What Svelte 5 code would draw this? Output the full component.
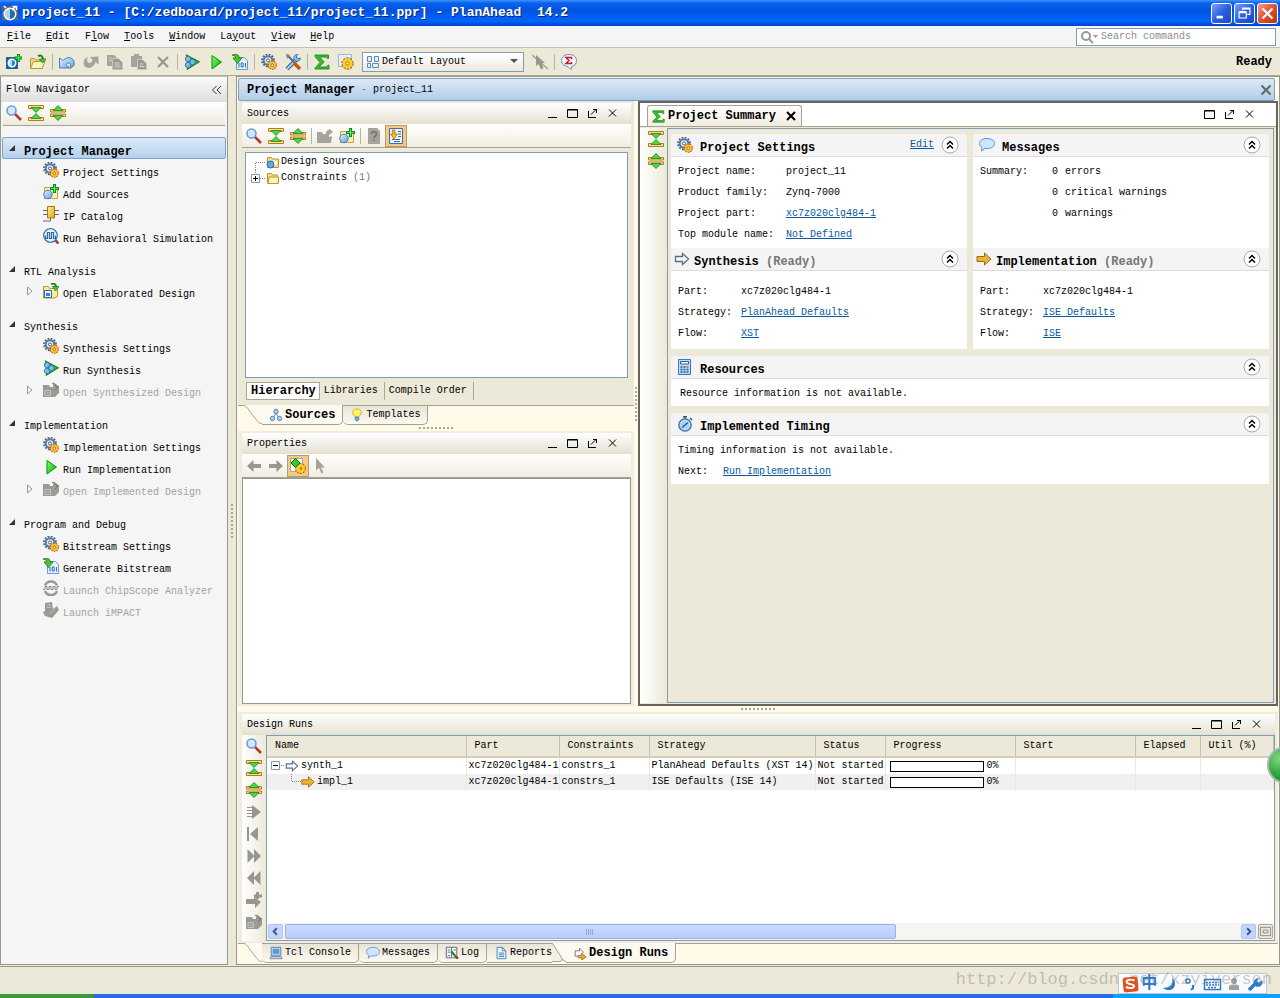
<script>
	const menus = [
		['', 'F', 'ile'],
		['', 'E', 'dit'],
		['F', 'l', 'ow'],
		['', 'T', 'ools'],
		['', 'W', 'indow'],
		['La', 'y', 'out'],
		['', 'V', 'iew'],
		['', 'H', 'elp']
	];

	// '|' is a separator
	const mainTools = [
		['new-project', 'New Project'],
		['open', 'Open Project'],
		['|'],
		['undo', 'Undo'],
		['redo', 'Redo'],
		['copy', 'Copy'],
		['paste', 'Paste'],
		['delete', 'Delete'],
		['|'],
		['run-synth', 'Run Synthesis'],
		['run', 'Run Implementation'],
		['bits', 'Generate Bitstream'],
		['|'],
		['gears', 'Project Settings'],
		['tools', 'Options'],
		['|'],
		['sigma', 'Project Summary'],
		['page-gear', 'Design Settings']
	];

	const sourceTools = [
		['search', 'Search'],
		['collapse', 'Collapse All'],
		['expand', 'Expand All'],
		['|'],
		['folder-off', 'Open File'],
		['add', 'Add Sources'],
		['|'],
		['help-off', 'Properties'],
		['scroll-to', 'Scroll to Selected']
	];

	const propertyTools = [
		['back', 'Back'],
		['forward', 'Forward'],
		['auto', 'Automatic Update'],
		['pointer', 'Select']
	];

	const runTools = [
		['search', 'Search'],
		['collapse', 'Collapse All'],
		['expand', 'Expand All'],
		['launch', 'Launch Runs'],
		['first', 'Reset Runs'],
		['next', 'Next'],
		['prev', 'Previous'],
		['add-run', 'Create Runs'],
		['design-off', 'Open Run']
	];

	const groups = [
		{
			title: 'Project Manager',
			current: true,
			items: [
				{ icon: 'gears', label: 'Project Settings' },
				{ icon: 'add', label: 'Add Sources' },
				{ icon: 'chip', label: 'IP Catalog' },
				{ icon: 'wave', label: 'Run Behavioral Simulation' }
			]
		},
		{
			title: 'RTL Analysis',
			items: [{ icon: 'design', label: 'Open Elaborated Design', tree: true }]
		},
		{
			title: 'Synthesis',
			items: [
				{ icon: 'gears', label: 'Synthesis Settings' },
				{ icon: 'run-synth', label: 'Run Synthesis' },
				{ icon: 'design-off', label: 'Open Synthesized Design', tree: true, off: true }
			]
		},
		{
			title: 'Implementation',
			items: [
				{ icon: 'gears', label: 'Implementation Settings' },
				{ icon: 'run', label: 'Run Implementation' },
				{ icon: 'design-off', label: 'Open Implemented Design', tree: true, off: true }
			]
		},
		{
			title: 'Program and Debug',
			items: [
				{ icon: 'gears', label: 'Bitstream Settings' },
				{ icon: 'bits', label: 'Generate Bitstream' },
				{ icon: 'scope', label: 'Launch ChipScope Analyzer', off: true },
				{ icon: 'impact', label: 'Launch iMPACT', off: true }
			]
		}
	];

	const runs = [
		{ name: 'synth_1', icon: 'arrow-open', strategy: 'PlanAhead Defaults (XST 14)', progress: 0 },
		{ name: 'impl_1', icon: 'arrow-gold', strategy: 'ISE Defaults (ISE 14)', progress: 0, child: true }
	];

	const runTabs = [
		['console', 'Tcl Console'],
		['bubble', 'Messages'],
		['log', 'Log'],
		['report', 'Reports']
	];
</script>

{#snippet icon(name)}
	<svg class="icon" viewBox="0 0 16 16" aria-hidden="true"><use href="#{name}" /></svg>
{/snippet}

{#snippet tools(list, active)}
	{#each list as [name, label]}
		{#if name === '|'}
			<span class="sep"></span>
		{:else}
			<button class="tool" class:active={name === active} title={label} aria-label={label}>{@render icon(name)}</button>
		{/if}
	{/each}
{/snippet}

{#snippet frameButtons(minimize)}
	<div class="frame-buttons">
		{#if minimize}
			<button aria-label="Minimize"><svg viewBox="0 0 11 11"><path d="M1 9.5h9" /></svg></button>
		{/if}
		<button aria-label="Maximize"><svg viewBox="0 0 11 11"><path d="M.5 1.500h10v8H.5zM1 2h9" /></svg></button>
		<button aria-label="Float"><svg viewBox="0 0 11 11"><path d="M1.500 3v7M1 9.500h8M4 6.500l5-5M6 1.500h4M9.500 1v4" /></svg></button>
		<button aria-label="Close"><svg viewBox="0 0 11 11"><path d="M2 1.500l7 7M9 1.500l-7 7" /></svg></button>
	</div>
{/snippet}

{#snippet fold()}
	<button class="fold" aria-label="Collapse section">
		<svg viewBox="0 0 18 18">
			<circle cx="9" cy="9" r="8" />
			<path d="M6 8.500l3-3 3 3M6 12.500l3-3 3 3" />
		</svg>
	</button>
{/snippet}

{#snippet slant()}
	<svg class="slant" viewBox="0 0 24 20" aria-hidden="true">
		<path class="face" d="M4 0c5 0 6 5 13 13 3 4 4 5.500 7 5.500V0z" />
		<path d="M4 0c5 0 6 5 13 13 3 4 4 5.500 7 5.500" />
	</svg>
{/snippet}

<!-- ------------------ icons ----------------- -->
<svg class="defs" width="0" height="0" aria-hidden="true">
	<defs>
		<linearGradient id="g-green" x1="0" y1="0" x2="1" y2="1">
			<stop offset="0" stop-color="#8f6" /><stop offset="1" stop-color="#0a1" />
		</linearGradient>
		<linearGradient id="g-gold" x1="0" y1="0" x2="1" y2="1">
			<stop offset="0" stop-color="#fff0a0" /><stop offset="1" stop-color="#e0a010" />
		</linearGradient>
		<linearGradient id="g-blue" x1="0" y1="0" x2="1" y2="1">
			<stop offset="0" stop-color="#e8f5ff" /><stop offset="1" stop-color="#5a9cdc" />
		</linearGradient>
	</defs>
	<symbol id="logo" viewBox="0 0 16 16">
		<path d="M0 1h16v14H0z" fill="#5d6672" /><circle cx="8" cy="9" r="6.500" fill="#fff" />
		<path d="M8 4a5 5 0 0 1 0 10z" fill="#1d6fa8" /><path d="M8 4a5 5 0 0 0 0 10z" fill="#a8d4f2" />
		<path d="M4 3L2 1M10 5l4-4M10.500 1.500h4V5" stroke="#fff" stroke-width="1.500" fill="none" />
	</symbol>
	<symbol id="new-project" viewBox="0 0 16 16">
		<path d="M0 3h12v12H0z" fill="#1d5f96" /><circle cx="6" cy="9" r="4.500" fill="#fff" />
		<path d="M6 6a3 3 0 0 1 0 6z" fill="#28c" /><path d="M6 6a3 3 0 0 0 0 6z" fill="#bde" />
		<path d="M12.500 0v8M8.500 4h8" stroke="#083" stroke-width="3" /><path d="M12.500 1v6M9.500 4h6" stroke="#5e4" stroke-width="1.200" />
	</symbol>
	<symbol id="open" viewBox="0 0 16 16">
		<path d="M.5 14.500v-10h4l1 1.500h7v8.500z" fill="#f3d77a" stroke="#b8963a" />
		<path d="M.5 14.500l3-7h11.500l-3 7z" fill="#fff3b8" stroke="#b8963a" />
		<path d="M8 2c3-1.500 5 0 5 4" fill="none" stroke="#181" stroke-width="2" /><path d="M9.500 5h6.500l-3.300 4z" fill="#4c3" stroke="#171" stroke-width=".7" />
	</symbol>
	<symbol id="undo" viewBox="0 0 16 16">
		<path d="M.5 4v10h10l-3.500-3.200c.8-2 3.500-2.300 4.500-.3l-.5 4 4-3c1.500-7-5-11-11-5z" fill="url(#g-blue)" stroke="#4583bd" />
	</symbol>
	<symbol id="redo" viewBox="0 0 16 16">
		<path d="M15.500 2.500v8l-3-2.500c-1 4-5 7-9 5.500C-.5 12 0 5 3 4l2-1c-2 4-.5 6 1.500 6s3-1.500 3-3L7 3z" fill="#a5a39b" />
	</symbol>
	<symbol id="copy" viewBox="0 0 16 16">
		<path d="M0 1h7l3 3v8H0z" fill="#a5a39b" /><path d="M5.500 4.500h6l4 4v7h-10z" fill="#9b9992" stroke="#c9c7bb" />
		<path d="M2 4h3M2 6.500h3M7.500 9h5M7.500 11h6M7.500 13h6" stroke="#d8d5c8" />
	</symbol>
	<symbol id="paste" viewBox="0 0 16 16">
		<path d="M0 2h3V0h5v2h3v11H0z" fill="#a5a39b" /><path d="M6.500 5.500h5l4 4v6h-9z" fill="#9b9992" stroke="#c9c7bb" />
		<path d="M8.500 10h4M8.500 12.500h5" stroke="#d8d5c8" />
	</symbol>
	<symbol id="delete" viewBox="0 0 16 16"><path d="M3 3l10 10M13 3L3 13" stroke="#98968f" stroke-width="2.200" /></symbol>
	<symbol id="run-synth" viewBox="0 0 16 16">
		<path d="M2 .8l13.500 7L3 15.500l3-7.500z" fill="#2fb52f" stroke="#0a7a1a" />
		<circle cx="4" cy="5" r="2.700" fill="#7cbcec" stroke="#2a6aa5" stroke-width=".8" /><circle cx="8.500" cy="8" r="2.700" fill="#7cbcec" stroke="#2a6aa5" stroke-width=".8" /><circle cx="4" cy="11" r="2.700" fill="#7cbcec" stroke="#2a6aa5" stroke-width=".8" />
	</symbol>
	<symbol id="run" viewBox="0 0 16 16"><path d="M4 1.500l9.500 6.500L4 15z" fill="url(#g-green)" stroke="#090" /></symbol>
	<symbol id="bits" viewBox="0 0 16 16">
		<path d="M4.500 3.500h8l3 3v9h-11z" fill="#e5f2ff" stroke="#6a9bcf" />
		<path d="M7 9v4.500M13.500 9v4.500M9.200 9h2v4h-2z" stroke="#2b70b8" fill="none" />
		<path d="M0 1l3-.5c4 0 4 1.500 4 3.500h3L5.500 9.500 1 4h2.500C3.500 2 2 1.500 0 1z" fill="#4c2" stroke="#161" stroke-width=".7" />
	</symbol>
	<symbol id="gears" viewBox="0 0 16 16">
		<circle cx="7" cy="6.500" r="6" fill="none" stroke="#4a6488" stroke-width="1.800" stroke-dasharray="1.800 1.340" />
		<circle cx="7" cy="6.500" r="4.300" fill="#dce7f2" stroke="#5a789c" stroke-width="2" /><circle cx="7" cy="6.500" r="1.500" fill="#fff" stroke="#567" />
		<circle cx="11.300" cy="11.200" r="4" fill="#f8b92c" stroke="#b86708" stroke-width="1.300" stroke-dasharray="1.600 .9" /><circle cx="11.300" cy="11.200" r="3.400" fill="#ffbe34" /><circle cx="11.300" cy="11.200" r="1.300" fill="#fff" stroke="#a50" stroke-width=".8" />
	</symbol>
	<symbol id="tools" viewBox="0 0 16 16">
		<path d="M2 15L13 4" stroke="#25629c" stroke-width="4" /><path d="M2 15L13 4" stroke="#9fd0f5" stroke-width="2" />
		<path d="M16 4a4 4 0 0 1-5 3L9 5c-1-2 1-5 4-5l-2 3 2 2z" fill="#8ac2ef" stroke="#25629c" stroke-width=".7" />
		<path d="M2 1l9 9" stroke="#567" stroke-width="2" /><path d="M9 9l6 6" stroke="#c25a10" stroke-width="3.500" /><path d="M1 0l4 1-3 4z" fill="#888" />
	</symbol>
	<symbol id="sigma" viewBox="0 0 16 16"><path d="M1 1h13.500v3.500h-1.200c-.3-1.200-1-1.500-2-1.500H5.500l4.700 5-5.200 5h6.500c1.200 0 2-.5 2.400-1.800H15V15H1v-1l5-5.500L1 2.500z" fill="#3bbd2b" stroke="#12901c" stroke-width=".9" /></symbol>
	<symbol id="page-gear" viewBox="0 0 16 16">
		<path d="M.5.5h13v12H.5z" fill="#eef5ff" stroke="#9ab0cc" /><path d="M3 3h8v7H3z" fill="#fff" stroke="#cde" />
		<circle cx="9.500" cy="9.500" r="5.500" fill="#ffc928" stroke="#a87400" stroke-width="1.400" stroke-dasharray="2.300 1.150" /><circle cx="9.500" cy="9.500" r="5" fill="#fccb34" /><circle cx="9.500" cy="9.500" r="1.600" fill="#fff8d0" stroke="#a87400" />
	</symbol>
	<symbol id="layout" viewBox="0 0 16 16">
		<path d="M2.500 2.500h4v5h-4zM9.500 2.500h4v5h-4zM2.500 9.500h3v4h-3zM7.500 9.500h6v4h-6z" fill="#e2eefb" stroke="#5c87b5" />
	</symbol>
	<symbol id="pointer-off" viewBox="0 0 16 16"><path d="M4 1v11l2.500-2 2.500 5.500 2.500-1.500L9.500 9H13z" fill="#98968f" /><path d="M0 1l16 14" stroke="#98968f" stroke-width="1.200" /></symbol>
	<symbol id="pointer" viewBox="0 0 16 16"><path d="M4 0v12.500l3-2.500 2.500 5.500 2-1L9 9.500h4z" fill="#a4a29b" /></symbol>
	<symbol id="feedback" viewBox="0 0 16 16">
		<path d="M8 .5c4.500 0 7.500 2.500 7.500 6s-2 5.500-5 6l-.5 3-3-3C3 12 .5 10 .5 6.500S3.500.5 8 .5z" fill="#f3f5fa" stroke="#7588ad" />
		<path d="M10.500 5V3.500H5l3 3-3 3h5.500V8" fill="none" stroke="#c8102e" stroke-width="1.400" />
	</symbol>
	<symbol id="search" viewBox="0 0 16 16">
		<path d="M9 9l6 6" stroke="#b4362c" stroke-width="2.500" /><circle cx="5.500" cy="5.500" r="4.500" fill="#cfe8ff" stroke="#6f9cd6" stroke-width="1.600" />
	</symbol>
	<symbol id="collapse" viewBox="0 0 16 16">
		<path d="M.5.500h15v3H.5zM.5 12.500h15v3H.5z" fill="#ffe08a" stroke="#b87b10" /><path d="M3 2.500h10L8 7.500zM3 13.500h10L8 8.500z" fill="#4d3" stroke="#273" stroke-width=".8" />
	</symbol>
	<symbol id="expand" viewBox="0 0 16 16">
		<path d="M.5 4.500h15v2.500H.5zM.5 9h15v2.500H.5z" fill="#ffe08a" stroke="#b87b10" /><path d="M3 5.500h10L8 .5zM3 10.500h10L8 15.500z" fill="#4d3" stroke="#273" stroke-width=".8" />
	</symbol>
	<symbol id="folder-off" viewBox="0 0 16 16"><path d="M0 15V4h5l1 2h3c0-3 1-4 3-4V.5L16 4l-4 3v2l3-1-1 7z" fill="#a5a39b" /></symbol>
	<symbol id="add" viewBox="0 0 16 16">
		<path d="M1.500 3.500h5l1 1h7v10h-13z" fill="#ffeeb0" stroke="#c4a04a" /><circle cx="5" cy="10.500" r="4.200" fill="url(#g-blue)" stroke="#4480bd" />
		<path d="M11.500 0v9M7 4.500h9" stroke="#083" stroke-width="3" /><path d="M11.500 1v7M8 4.500h7" stroke="#5e4" stroke-width="1.200" />
	</symbol>
	<symbol id="help-off" viewBox="0 0 16 16"><path d="M2 0h9l3 3v13H2z" fill="#a5a39b" /><path d="M5.500 6c0-3 5-3 5 0 0 2-2.500 2-2.500 4M8 11.500V13" fill="none" stroke="#777" stroke-width="1.800" /></symbol>
	<symbol id="scroll-to" viewBox="0 0 16 16"><path d="M1.500.5h13v15h-13z" fill="#eaf4ff" stroke="#3c6ea5" /><path d="M10 3.500h3M10 6h3M10 8.500h3M4 11.500h8M6 13.500h6" stroke="#3c6ea5" /><path d="M4 2h3v4h2.500L6 11 2.500 6H5z" fill="#f5b82a" stroke="#a66f00" stroke-width=".7" /></symbol>
	<symbol id="back" viewBox="0 0 16 16"><path d="M1 8l6.500-6v4H15v4H7.500v4z" fill="#98968f" /></symbol>
	<symbol id="forward" viewBox="0 0 16 16"><path d="M15 8L8.500 2v4H1v4h7.500v4z" fill="#98968f" /></symbol>
	<symbol id="auto" viewBox="0 0 16 16"><path d="M.5.5h12v13H.5z" fill="#fff" stroke="#9aa" /><circle cx="10.500" cy="10.500" r="4.800" fill="#ffcf30" stroke="#a87400" stroke-width="1.300" stroke-dasharray="2 1" /><circle cx="10.500" cy="10.500" r="4.300" fill="#fccb34" /><circle cx="11" cy="10.500" r="1.200" fill="#a87400" /><path d="M1 5L5.500.5 10 5 5.500 9.500z" fill="#3c2" stroke="#161" /></symbol>
	<symbol id="chip" viewBox="0 0 16 16"><path d="M0 4.500h16M0 8.500h16M0 15h7.500v-3" stroke="#667" fill="none" /><path d="M4.500.5h7v11.500h-7z" fill="url(#g-gold)" stroke="#a67a08" /></symbol>
	<symbol id="wave" viewBox="0 0 16 16"><path d="M11 11l4.500 4.500" stroke="#a33" stroke-width="2.500" /><circle cx="7.500" cy="7.500" r="6.800" fill="#e8f4ff" stroke="#3f7ab5" stroke-width="1.300" /><path d="M2.500 7.500v3h2v-6h2v6h2v-6h2v6h2v-3" fill="none" stroke="#2767a8" stroke-width="1.200" /></symbol>
	<symbol id="design" viewBox="0 0 16 16"><path d="M.5 3.500h5l1 2h8v8l-3 1.500H.5z" fill="#fdeaa2" stroke="#b8963a" /><path d="M1.500 7.500h7v7h-7z" fill="#e8f2ff" stroke="#2c6db0" /><path d="M3 10h4v3H3z" fill="#3b7fc4" /><path d="M8 1c3-1 5 0 5 3" fill="none" stroke="#181" stroke-width="2" /><path d="M9.500 3.500h6.500L12.500 8z" fill="#4c3" stroke="#171" stroke-width=".7" /></symbol>
	<symbol id="design-off" viewBox="0 0 16 16"><path d="M0 3h6l1 2h3V2h3l3 3v6l-4 4H0z" fill="#9b9a96" /><path d="M2 8.500h5.500v5H2zM3.500 11h3" stroke="#c5c4bf" fill="none" /><path d="M9 1.500c3-1 4 1 4 3h2.500L12 8" fill="none" stroke="#77756f" /></symbol>
	<symbol id="scope" viewBox="0 0 16 16"><path d="M2 5.500a6.500 6.500 0 0 1 12 0M2 11a6.500 6.500 0 0 0 12 0" fill="none" stroke="#9a9993" stroke-width="2.500" /><path d="M0 9.500h2v-3h2v3h2v-3h2v3h2v-3h2v3h2v-3h2" fill="none" stroke="#85847f" /></symbol>
	<symbol id="impact" viewBox="0 0 16 16"><path d="M2 1l7-1 1 7 4-3 2 4-7 8-7-2-2-4 2-1z" fill="#9a9993" /><path d="M4 3h4M4 5.500h4M6 12l6-5" stroke="#c5c4bf" /></symbol>
	<symbol id="folder" viewBox="0 0 16 16"><path d="M2.500 13.500v-10h4l1 1.500h5v2" fill="#f7dc86" stroke="#b8963a" /><path d="M3 13.500l1-6.500h9.500v6.500z" fill="#fff1b4" stroke="#b8963a" /></symbol>
	<symbol id="folder-src" viewBox="0 0 16 16"><path d="M2.500 13.500v-10h4l1 1.500h6v8.500z" fill="#f7dc86" stroke="#b8963a" /><path d="M7 7h5v4H7z" fill="#fff" /><circle cx="5.500" cy="10.500" r="3.500" fill="#5fa8e8" stroke="#2f6aa8" /></symbol>
	<symbol id="hierarchy" viewBox="0 0 16 16"><path d="M8 6L5 11M8 6l3 5" stroke="#57a" /><circle cx="8" cy="4" r="2.500" fill="#a5cdf0" stroke="#4a7db5" /><circle cx="4" cy="12" r="2.500" fill="#a5cdf0" stroke="#4a7db5" /><circle cx="12" cy="12" r="2.500" fill="#a5cdf0" stroke="#4a7db5" /></symbol>
	<symbol id="bulb" viewBox="0 0 16 16"><path d="M6 10C1 6 3 1 8 1s7 5 2 9z" fill="#fff36a" stroke="#c9a91c" /><path d="M6 10.500h4v3l-2 1.500-2-1.500z" fill="#74aee0" stroke="#3f78b0" /></symbol>
	<symbol id="arrow-open" viewBox="0 0 16 16"><path d="M1.500 5.500h7V2.500l6 5.500-6 5.500v-3h-7z" fill="#f4f9ff" stroke="#5d6f85" stroke-width="1.300" /></symbol>
	<symbol id="arrow-gold" viewBox="0 0 16 16"><path d="M1 5.500h7.500V2l6.500 6-6.500 6v-3.500H1z" fill="#eab333" stroke="#9a6b12" /></symbol>
	<symbol id="bubble" viewBox="0 0 16 16"><path d="M8 1.500c4.500 0 7.500 2 7.500 5s-3 5-7.500 5c-1 0-1.500 0-2-.2L2.500 14l.5-3.500C1.500 9.500.5 8 .5 6.500c0-3 3-5 7.500-5z" fill="#cfe5fd" stroke="#5a93d4" /></symbol>
	<symbol id="calc" viewBox="0 0 16 16"><path d="M1.500.5h12v15h-12z" fill="#bcdcf8" stroke="#3a77b3" /><path d="M3.500 2.500h8v2.500h-8z" fill="#fff" stroke="#2b5f95" /><path d="M3.500 8h2M6.500 8h2M3.500 10.500h2M6.500 10.500h2M9.500 10.500h2M3.500 13h2M6.500 13h2M9.500 13h2" stroke="#22598f" stroke-width="1.600" /><path d="M9.500 8h2" stroke="#e05010" stroke-width="1.600" /></symbol>
	<symbol id="clock" viewBox="0 0 16 16"><path d="M6 .8h4M8 1v2M13 2l2 2" stroke="#456" stroke-width="1.500" /><circle cx="8" cy="9" r="6.200" fill="#a5d0f7" stroke="#3f6f9e" stroke-width="1.300" /><circle cx="8" cy="9" r="4.200" fill="none" stroke="#fff" stroke-dasharray="1 2" /><path d="M5 11.500L11 6.500" stroke="#24598f" stroke-width="1.300" /></symbol>
	<symbol id="launch" viewBox="0 0 16 16"><path d="M6 1l9 7-9 7z" fill="#98968f" /><path d="M1 3.500h5M1 6.500h5M1 9.500h5M1 12.500h5" stroke="#98968f" /></symbol>
	<symbol id="first" viewBox="0 0 16 16"><path d="M1 1h2v14H1zM12 1v14L4 8z" fill="#98968f" /></symbol>
	<symbol id="next" viewBox="0 0 16 16"><path d="M1.500 1l7 7-7 7zM8 1l7 7-7 7z" fill="#98968f" /></symbol>
	<symbol id="prev" viewBox="0 0 16 16"><path d="M8 1v14L1 8zM14.500 1v14l-7-7z" fill="#98968f" /></symbol>
	<symbol id="add-run" viewBox="0 0 16 16"><path d="M0 7h8V5l7 5-6 6v-4H0zM10 0h3v2.500h3v3h-3V7h-3V5.500H8v-3h2z" fill="#98968f" /></symbol>
	<symbol id="console" viewBox="0 0 16 16"><path d="M2.500 1.500h11v9h-11z" fill="#e4eefa" stroke="#4c6d92" /><path d="M4 3h8v6H4z" fill="#5c9ade" /><path d="M2 12h12l1 2.500H1z" fill="#ccd8e6" stroke="#4c6d92" stroke-width=".8" /></symbol>
	<symbol id="log" viewBox="0 0 16 16"><path d="M1.500 1.500h12v12h-12z" fill="#fff" stroke="#557" /><path d="M7.500 2v11M3 4.500h3M3 7h3M9.500 4.500h3M3 11h3" stroke="#557" /><path d="M7 6l7 8" stroke="#1a8a2a" stroke-width="2.500" /><path d="M13 12.500l2 2" stroke="#b22" stroke-width="2" /></symbol>
	<symbol id="report" viewBox="0 0 16 16"><path d="M3.500 1.500h6l4 4v9h-10z" fill="#eaf4ff" stroke="#3f7ab5" /><path d="M9.500 1.500v4h4M5.500 8h6M5.500 10h6M5.500 12h6" fill="none" stroke="#3f7ab5" /></symbol>
	<symbol id="runs" viewBox="0 0 16 16"><path d="M6 11.500H2.500v-6h5v-3l4.500 4.500-3 3" fill="#fff" stroke="#667" /><path d="M6 11h4V8.500l5 4-5 3.500v-2.500H6z" fill="#eab333" stroke="#86600f" stroke-width=".8" /></symbol>
</svg>

<div class="window">
	<header class="title-bar">
		{@render icon('logo')}
		<h1>project_11 - [C:/zedboard/project_11/project_11.ppr] - PlanAhead&nbsp; 14.2</h1>
		<button aria-label="Minimize"><svg viewBox="0 0 21 21"><path d="M5 14.500h7" stroke-width="3" /></svg></button>
		<button aria-label="Restore"><svg viewBox="0 0 21 21"><path d="M4.500 9.500h8v6h-8zM4.500 8.500h8M8.500 7V4.500h8v7h-3M8.500 5.500h8" stroke-width="1.300" /></svg></button>
		<button class="close" aria-label="Close"><svg viewBox="0 0 21 21"><path d="M5 5l11 11M16 5L5 16" stroke-width="2.500" /></svg></button>
	</header>

	<nav class="menu-bar">
		{#each menus as [before, key, after]}
			<button>{before}<u>{key}</u>{after}</button>
		{/each}
		<label class="search">
			<svg viewBox="0 0 20 14" aria-hidden="true"><circle cx="5" cy="6" r="4" /><path d="M8 9l4 4" /><path class="drop" d="M12 5h5l-2.500 3z" /></svg>
			<input type="text" placeholder="Search commands" aria-label="Search commands" />
		</label>
	</nav>

	<div class="main-tools">
		{@render tools(mainTools)}
		<label class="layout-box">
			{@render icon('layout')}
			<select aria-label="Layout">
				<option>Default Layout</option>
			</select>
			<svg class="caret" viewBox="0 0 8 5" aria-hidden="true"><path d="M0 0h8L4 4z" /></svg>
		</label>
		{@render tools([['pointer-off', 'Unselect'], ['|'], ['feedback', 'Feedback']])}
		<strong class="state">Ready</strong>
	</div>

	<div class="content">
		<aside class="navigator">
			<div class="nav-head">
				<span>Flow Navigator</span>
				<button aria-label="Hide"><svg viewBox="0 0 10 10"><path d="M4.500 1l-4 4 4 4M9 1L5 5l4 4" /></svg></button>
			</div>
			<div class="nav-tools">{@render tools(runTools.slice(0, 3))}</div>
			<div class="flow">
				{#each groups as group}
					<section>
						<button class="group" class:current={group.current}>
							<svg viewBox="0 0 8 8" aria-hidden="true"><path d="M7 1v6H1z" /></svg>
							<span>{group.title}</span>
						</button>
						{#each group.items as item}
							<button class="item" disabled={item.off}>
								<svg class="twist" viewBox="0 0 8 10" aria-hidden="true">
									{#if item.tree}<path d="M1.500 1l4.500 4-4.500 4z" />{/if}
								</svg>
								{@render icon(item.icon)}
								<span>{item.label}</span>
							</button>
						{/each}
					</section>
				{/each}
			</div>
		</aside>

		<div class="grip upright"></div>

		<main class="workspace">
			<div class="work-head">
				<strong>Project Manager</strong><i>-</i><span>project_11</span>
				<button aria-label="Close"><svg viewBox="0 0 12 12"><path d="M1.500 1.500l9 9M10.500 1.500l-9 9" /></svg></button>
			</div>

			<div class="upper">
				<div class="left-stack">
					<section class="panel sources">
						<div class="panel-head"><h2>Sources</h2>{@render frameButtons(true)}</div>
						<div class="panel-tools">{@render tools(sourceTools, 'scroll-to')}</div>
						<div class="tree">
							<div class="node">
								<svg class="lines" viewBox="0 0 16 16"><path d="M6.500 16V8.500H16" /></svg>
								{@render icon('folder-src')}<span>Design Sources</span>
							</div>
							<div class="node">
								<svg class="lines" viewBox="0 0 16 16"><path d="M6.500 0v4M11 8.500h5" /><path class="box" d="M2.500 4.500h8v8h-8z" /><path class="mark" d="M4 8.500h5M6.500 6v5" /></svg>
								{@render icon('folder')}<span>Constraints <em>(1)</em></span>
							</div>
						</div>
						<div class="view-tabs">
							<button class="on">Hierarchy</button>
							<button>Libraries</button>
							<button>Compile Order</button>
						</div>
					</section>
					<div class="dock-tabs">
						{@render slant()}
						<button class="on">{@render icon('hierarchy')}Sources</button>
						<button>{@render icon('bulb')}Templates</button>
					</div>
					<div class="grip"></div>
					<section class="panel properties">
						<div class="panel-head"><h2>Properties</h2>{@render frameButtons(true)}</div>
						<div class="panel-tools">{@render tools(propertyTools, 'auto')}</div>
						<div class="blank"></div>
					</section>
				</div>

				<div class="grip upright"></div>

				<section class="summary">
					<div class="summary-head">
						<div class="summary-tab">
							{@render icon('sigma')}<strong>Project Summary</strong>
							<button aria-label="Close tab"><svg viewBox="0 0 10 10"><path d="M1 1l8 8M9 1L1 9" /></svg></button>
						</div>
						{@render frameButtons(false)}
					</div>
					<div class="summary-body">
						<div class="side-tools">{@render tools(runTools.slice(1, 3))}</div>
						<div class="cards">
							<div class="pair">
								<article class="tall">
									<header>{@render icon('gears')}<h3>Project Settings</h3><a href="#edit">Edit</a>{@render fold()}</header>
									<dl class="wide">
										<dt>Project name:</dt><dd>project_11</dd>
										<dt>Product family:</dt><dd>Zynq-7000</dd>
										<dt>Project part:</dt><dd><a href="#part">xc7z020clg484-1</a></dd>
										<dt>Top module name:</dt><dd><a href="#top">Not Defined</a></dd>
									</dl>
								</article>
								<article class="tall">
									<header>{@render icon('bubble')}<h3>Messages</h3>{@render fold()}</header>
									<dl class="counts">
										<dt>Summary:</dt>
										<dd><b>0</b>errors</dd>
										<dd><b>0</b>critical warnings</dd>
										<dd><b>0</b>warnings</dd>
									</dl>
								</article>
								<article>
									<header class="arrow">{@render icon('arrow-open')}<h3>Synthesis <em>(Ready)</em></h3>{@render fold()}</header>
									<dl class="run">
										<dt>Part:</dt><dd>xc7z020clg484-1</dd>
										<dt>Strategy:</dt><dd><a href="#strategy">PlanAhead Defaults</a></dd>
										<dt>Flow:</dt><dd><a href="#flow">XST</a></dd>
									</dl>
								</article>
								<article>
									<header class="arrow">{@render icon('arrow-gold')}<h3>Implementation <em>(Ready)</em></h3>{@render fold()}</header>
									<dl class="run">
										<dt>Part:</dt><dd>xc7z020clg484-1</dd>
										<dt>Strategy:</dt><dd><a href="#strategy">ISE Defaults</a></dd>
										<dt>Flow:</dt><dd><a href="#flow">ISE</a></dd>
									</dl>
								</article>
							</div>
							<article>
								<header>{@render icon('calc')}<h3>Resources</h3>{@render fold()}</header>
								<p>Resource information is not available.</p>
							</article>
							<article>
								<header>{@render icon('clock')}<h3>Implemented Timing</h3>{@render fold()}</header>
								<dl class="next">
									<dd class="full">Timing information is not available.</dd>
									<dt>Next:</dt><dd><a href="#run">Run Implementation</a></dd>
								</dl>
							</article>
						</div>
					</div>
				</section>
			</div>

			<div class="grip"></div>

			<section class="panel runs">
				<div class="panel-head"><h2>Design Runs</h2>{@render frameButtons(true)}</div>
				<div class="runs-body">
					<div class="side-tools">{@render tools(runTools)}</div>
					<div class="table-box">
						<table>
							<colgroup>
								<col class="w-name" /><col class="w-part" /><col class="w-cons" /><col class="w-strat" /><col class="w-status" />
								<col class="w-prog" /><col class="w-start" /><col class="w-elapsed" /><col />
							</colgroup>
							<thead>
								<tr>
									{#each ['Name', 'Part', 'Constraints', 'Strategy', 'Status', 'Progress', 'Start', 'Elapsed', 'Util (%)'] as title}
										<th>{title}</th>
									{/each}
								</tr>
							</thead>
							<tbody>
								{#each runs as run}
									<tr>
										<td>
											<div class="run-name" class:child={run.child}>
												<svg class="lines" viewBox="0 0 16 16">
													{#if run.child}
														<path d="M6.500 0v7.500H16" />
													{:else}
														<path d="M12 7.500h4" /><path class="box" d="M2.500 3.500h8v8h-8z" /><path class="mark" d="M4 7.500h5" />
													{/if}
												</svg>
												{@render icon(run.icon)}<span>{run.name}</span>
											</div>
										</td>
										<td>xc7z020clg484-1</td>
										<td>constrs_1</td>
										<td>{run.strategy}</td>
										<td>Not started</td>
										<td><div class="progress"><span><i style="width: {run.progress}%"></i></span>{run.progress}%</div></td>
										<td></td>
										<td></td>
										<td></td>
									</tr>
								{/each}
							</tbody>
						</table>
						<div class="scrollbar">
							<button aria-label="Scroll left"><svg viewBox="0 0 14 14"><path d="M8.500 3.500L5 7l3.500 3.500" /></svg></button>
							<div class="track"><div class="thumb"><svg viewBox="0 0 8 6"><path d="M.5 0v6M2.500 0v6M4.500 0v6M6.500 0v6" /></svg></div></div>
							<button aria-label="Scroll right"><svg viewBox="0 0 14 14"><path d="M5.500 3.500L9 7l-3.500 3.500" /></svg></button>
							<button class="corner" aria-label="Columns"><svg viewBox="0 0 14 14"><path d="M1.500 2.500h11v9h-11zM4.500 5.500h5v3h-5z" /></svg></button>
						</div>
					</div>
				</div>
			</section>
			<div class="dock-tabs">
				{@render slant()}
				{#each runTabs as [name, label]}
					<button>{@render icon(name)}{label}</button>
				{/each}
				<svg class="notch" viewBox="0 0 14 20" aria-hidden="true">
					<path class="face" d="M0 0l12 18.500H0z" />
					<path class="open" d="M0 0l8 12c2 4 3 6 6 6.500V0z" />
					<path d="M0 0l8 12c2 4 3 6 6 6.500M0 18.500h7c2 0 3-1 3-3" />
				</svg>
				<button class="on">{@render icon('runs')}Design Runs</button>
			</div>
		</main>
	</div>

	<footer class="status">
		<div class="ime">
			<svg viewBox="0 0 20 18"><rect x="3" y="2" width="15" height="15" rx="3" fill="#e2501c" transform="rotate(-6 10 9)" /><path d="M14.500 5.500c-3-1.500-8-1-8 1.500s7.500 1.500 7.500 4-5 2.500-8 1" fill="none" stroke="#fff" stroke-width="2" /></svg>
			<span>中</span>
			<svg viewBox="0 0 20 18"><path d="M13 3c2 6-2 10-9 10 5 4 12 2 12-4 0-3-1-5-3-6z" fill="#2c7cc9" /></svg>
			<svg viewBox="0 0 20 18"><circle cx="8" cy="6" r="2" fill="none" stroke="#2c7cc9" stroke-width="1.500" /><path d="M13 10v3l-2 2" fill="none" stroke="#2c7cc9" stroke-width="2" /></svg>
			<svg viewBox="0 0 20 18"><path d="M2.500 4.500h16v10h-16z" fill="#fff" stroke="#2c7cc9" stroke-width="1.500" /><path d="M4 7.500h13M4 10h13M6 12.500h9" stroke="#2c7cc9" stroke-width="1.500" stroke-dasharray="2 1" /></svg>
			<svg viewBox="0 0 20 18"><circle cx="10" cy="6" r="3" fill="#a0a0a0" /><path d="M5 15V11c0-2 10-2 10 0v4z" fill="#a0a0a0" /></svg>
			<svg viewBox="0 0 20 18"><path d="M4 15l7-7" stroke="#2c7cc9" stroke-width="3.500" /><path d="M17 5a4.500 4.500 0 0 1-8 4.500C8 6 10 3 14 3l-2 3 2 2z" fill="#2c7cc9" /></svg>
		</div>
	</footer>
	<div class="taskbar"><span class="start"></span><span class="tray"></span></div>
	<div class="watermark">http://blog.csdn.net/xzyiverson</div>
	<div class="ball"></div>
</div>

<!-- ------------------ style ----------------- -->
<style>
	:global(body) {
		margin: 0;
	}

	.window {
		position: relative;
		display: flex;
		flex-direction: column;
		min-height: 100vh;
		overflow: hidden;
		background: #ece9d8;
		color: #000;
		font: 10px/16px "Liberation Mono", "Noto Sans CJK SC", monospace;
	}

	.window * {
		box-sizing: border-box;
	}

	.defs {
		position: absolute;
	}

	button {
		padding: 0;
		border: 0;
		background: none;
		color: inherit;
		font: inherit;
	}

	h1, h2, h3, dl, dd, p {
		margin: 0;
	}

	strong, h3 {
		font-size: 12px;
		font-weight: bold;
	}

	em, i {
		color: #777;
		font-style: normal;
	}

	a {
		color: #0a58a0;
	}

	svg {
		display: block;
		flex: none;
		fill: none;
	}

	.icon {
		width: 16px;
		height: 16px;
	}

	/* title, menus, main toolbar */
	.title-bar {
		display: flex;
		align-items: center;
		gap: 2px;
		height: 26px;
		padding: 0 2px;
		background: linear-gradient(#3d95ff 0, #0a62ee 3px, #0053e0 10px, #0265ff 21px, #0040c8 26px);
	}

	.title-bar h1 {
		flex: 1;
		padding-left: 2px;
		color: #fff;
		font-size: 13px;
		text-shadow: 1px 1px #0a246a;
	}

	.title-bar button {
		width: 21px;
		height: 21px;
		border: 1px solid #fff;
		border-radius: 3px;
		background: linear-gradient(135deg, #7aa2f8, #2a5fe0 50%, #1c48c4);
	}

	.title-bar button svg {
		width: 19px;
		height: 19px;
		stroke: #fff;
	}

	.title-bar .close {
		background: linear-gradient(135deg, #f2a088, #e0502c 50%, #b8320e);
	}

	.menu-bar {
		display: flex;
		align-items: center;
		gap: 15px;
		height: 22px;
		padding: 0 4px 0 7px;
		border-bottom: 1px solid #c5c2b2;
		background: #f5f5f5;
	}

	.search {
		display: flex;
		align-items: center;
		width: 200px;
		height: 18px;
		margin-left: auto;
		border: 1px solid #7f9db9;
		background: #fff;
	}

	.search svg {
		width: 20px;
		height: 14px;
		margin-left: 4px;
		stroke: #999;
		stroke-width: 2;
	}

	.search .drop {
		fill: #999;
		stroke: none;
	}

	.search input {
		flex: 1;
		min-width: 0;
		padding: 0;
		border: 0;
		background: none;
		font: inherit;
	}

	.search input::placeholder {
		color: #8c8c8c;
	}

	.main-tools {
		display: flex;
		align-items: center;
		height: 28px;
		padding: 0 8px 0 2px;
		border-bottom: 1px solid #aaa799;
	}

	.tool {
		display: grid;
		place-items: center;
		width: 22px;
		height: 22px;
	}

	.tool.active {
		border: 1px solid #aaa07c;
		background: #fbc67e;
	}

	.main-tools .tool {
		width: 24px;
	}

	.sep {
		width: 1px;
		height: 16px;
		margin: 0 2px;
		background: #b5b2a2;
	}

	.layout-box {
		display: flex;
		align-items: center;
		width: 162px;
		height: 20px;
		margin: 0 4px;
		padding: 0 5px 0 2px;
		border: 1px solid #7f9db9;
		background: linear-gradient(#fff, #eceade);
	}

	.layout-box select {
		flex: 1;
		appearance: none;
		padding: 0 0 0 1px;
		border: 0;
		background: none;
		font: inherit;
	}

	.caret {
		width: 8px;
		height: 5px;
		fill: #555;
	}

	.state {
		margin-left: auto;
	}

	/* flow navigator */
	.content {
		flex: 1;
		display: flex;
		min-height: 0;
	}

	.navigator {
		width: 228px;
		border: 1px solid #999690;
		border-top-color: #c5c2b2;
		background: #f5f5f5;
	}

	.nav-head {
		display: flex;
		align-items: center;
		justify-content: space-between;
		height: 25px;
		padding: 0 5px;
		background: linear-gradient(#fafafa, #dedede);
	}

	.nav-head svg {
		width: 10px;
		height: 10px;
		stroke: #333;
	}

	.nav-tools {
		display: flex;
		height: 24px;
		margin: 0 2px;
		border-bottom: 1px solid #a5a294;
		background: linear-gradient(#fff, #eeeade);
	}

	.flow {
		display: flex;
		flex-direction: column;
		gap: 11px;
		padding: 11px 1px;
	}

	.group {
		display: flex;
		align-items: center;
		gap: 8px;
		width: 100%;
		height: 22px;
		padding: 0 5px;
		border: 1px solid transparent;
	}

	.group svg {
		width: 8px;
		height: 8px;
		fill: #333;
	}

	.group span,
	.item span {
		padding-top: 7px;
	}

	.group.current {
		border-color: #7da2ce;
		border-radius: 2px;
		background: linear-gradient(#dceaf8, #b4d0ec);
		font-size: 12px;
		font-weight: bold;
	}

	.item {
		display: flex;
		align-items: center;
		gap: 4px;
		width: 100%;
		height: 22px;
		padding-left: 24px;
	}

	.item:disabled {
		color: #a5a398;
	}

	.twist {
		width: 8px;
		height: 10px;
		margin-right: 5px;
		stroke: #999;
	}

	/* splitters */
	.grip {
		display: grid;
		place-items: center;
		flex: none;
		height: 6px;
	}

	.grip::after {
		content: '';
		width: 34px;
		height: 2px;
		background: repeating-linear-gradient(90deg, #aaa799 0 2px, transparent 2px 4px);
	}

	.upright {
		width: 4px;
		height: auto;
	}

	.upright::after {
		width: 2px;
		height: 34px;
		background: repeating-linear-gradient(#aaa799 0 2px, transparent 2px 4px);
	}

	.content > .grip {
		width: 8px;
	}

	/* workspace */
	.workspace {
		flex: 1;
		display: flex;
		flex-direction: column;
		min-width: 0;
		padding: 1px;
		border: 1px solid #999690;
		background: #fffbe8;
	}

	.work-head {
		display: flex;
		align-items: center;
		gap: 6px;
		height: 23px;
		margin-right: 3px;
		padding: 0 2px 0 8px;
		border: 1px solid #7f9db9;
		border-radius: 2px;
		background: linear-gradient(#dce9f7, #b2cde8);
	}

	.work-head button {
		margin-left: auto;
	}

	.work-head svg {
		width: 12px;
		height: 12px;
		stroke: #666;
		stroke-width: 2;
	}

	.upper {
		flex: 1;
		display: flex;
		min-height: 0;
	}

	.left-stack {
		display: flex;
		flex-direction: column;
		width: 396px;
	}

	.panel {
		display: flex;
		flex-direction: column;
		padding: 2px 3px 2px 4px;
		background: #f0ede0;
	}

	.panel-head {
		display: flex;
		align-items: center;
		flex: none;
		height: 21px;
		padding: 0 13px 0 5px;
		background: linear-gradient(#fff, #e4e0d0);
	}

	.panel-head h2 {
		flex: 1;
		font-size: 10px;
		font-weight: normal;
	}

	.frame-buttons {
		display: flex;
		gap: 9px;
	}

	.frame-buttons svg {
		width: 11px;
		height: 11px;
		stroke: #000;
	}

	.panel-tools {
		display: flex;
		align-items: center;
		flex: none;
		height: 24px;
		padding-left: 1px;
		border-bottom: 1px solid #a5a294;
		background: linear-gradient(#fff, #f0ede0);
	}

	.sources {
		flex: 31 1 0;
		background: #ece9d8;
	}

	.tree {
		flex: 1;
		margin: 4px 3px 0;
		padding: 1px 2px;
		border: 1px solid #7f9db9;
		background: #fff;
	}

	.node {
		display: flex;
		align-items: center;
		height: 16px;
		padding-left: 1px;
	}

	.lines {
		width: 16px;
		height: 16px;
		stroke: #888;
		stroke-dasharray: 1 1;
	}

	.lines .box {
		stroke: #7b9ab8;
		stroke-dasharray: none;
		fill: #fff;
	}

	.lines .mark {
		stroke: #000;
		stroke-dasharray: none;
	}

	.view-tabs {
		display: flex;
		height: 25px;
		padding: 4px 4px 3px;
	}

	.view-tabs button {
		padding: 0 6px 0 4px;
		border-right: 1px solid #aaa799;
	}

	.view-tabs .on {
		padding: 0 3px 0 4px;
		border: 1px solid #aaa799;
		background: #fff;
		font-size: 12px;
		font-weight: bold;
	}

	.dock-tabs {
		display: flex;
		flex: none;
		height: 20px;
		border-top: 1px solid #a5a294;
	}

	.dock-tabs button {
		display: flex;
		align-items: center;
		gap: 2px;
		height: 19px;
		padding: 0 7px;
		border: 1px solid #a5a294;
		border-width: 0 1px 1px 0;
		border-radius: 0 0 5px 5px;
		background: linear-gradient(#e8e5d6, #fbf9f0);
	}

	.dock-tabs button:has(+ .notch) {
		padding-right: 0;
		border-right: 0;
		border-radius: 0;
	}

	.dock-tabs .icon {
		width: 14px;
		height: 14px;
	}

	.dock-tabs .on {
		height: 20px;
		margin-top: -1px;
		border-bottom-left-radius: 0;
		background: #fbf9f0;
		font-size: 12px;
		font-weight: bold;
	}

	.slant,
	.notch {
		width: 24px;
		height: 20px;
		margin-top: -1px;
		stroke: #a5a294;
	}

	.slant .face,
	.notch .open {
		fill: #fbf9f0;
		stroke: none;
	}

	.notch {
		width: 14px;
	}

	.notch .face {
		fill: #f3f0e4;
		stroke: none;
	}

	.properties {
		flex: 28 1 0;
	}

	.blank {
		flex: 1;
		border: 1px solid #999690;
		background: #fff;
	}

	/* project summary */
	.summary {
		flex: 1;
		display: flex;
		flex-direction: column;
		min-width: 0;
		border: 2px solid #66645c;
		background: #fff;
	}

	.summary-head {
		display: flex;
		align-items: center;
		height: 24px;
		padding: 0 21px 0 7px;
		border-bottom: 1px solid #a5a294;
	}

	.summary-tab {
		display: flex;
		align-items: center;
		align-self: flex-end;
		gap: 3px;
		height: 21px;
		margin-right: auto;
		padding: 0 5px 0 4px;
		border: 1px solid #a5a294;
		border-bottom: 0;
		border-radius: 3px 3px 0 0;
		background: linear-gradient(#fff, #f0ede0);
	}

	.summary-tab .icon {
		width: 13px;
		height: 13px;
	}

	.summary-tab button {
		margin-left: 7px;
	}

	.summary-tab button svg {
		width: 10px;
		height: 10px;
		stroke: #000;
		stroke-width: 2;
	}

	.summary-body {
		flex: 1;
		display: flex;
		padding: 1px 2px 1px 0;
		background: #ece9d8;
	}

	.side-tools {
		display: flex;
		flex-direction: column;
		align-items: center;
		flex: none;
		width: 24px;
		background: linear-gradient(90deg, #fff, #ece9d8);
	}

	.summary .side-tools {
		width: 27px;
		padding-left: 4px;
	}

	.cards {
		flex: 1;
		display: flex;
		flex-direction: column;
		gap: 7px;
		padding: 5px 4px 6px 3px;
		border: 1px solid #7f9db9;
	}

	.pair {
		display: grid;
		grid-template-columns: 1fr 1fr;
		column-gap: 6px;
	}

	article {
		border-radius: 4px 4px 0 0;
		background: #fff;
	}

	article header {
		display: flex;
		align-items: center;
		gap: 7px;
		height: 23px;
		padding: 0 8px 0 6px;
		border-bottom: 1px solid #ddd;
		border-radius: 4px 4px 0 0;
		background: #f4f4f4;
	}

	article header.arrow {
		gap: 4px;
		padding-left: 3px;
	}

	article h3 {
		flex: 1;
		padding-top: 5px;
	}

	.fold svg {
		width: 18px;
		height: 18px;
		fill: #fff;
		stroke: #aaa;
	}

	.fold path {
		fill: none;
		stroke: #000;
		stroke-width: 1.5;
	}

	dl {
		display: grid;
		align-content: start;
		padding: 4px 7px 3px;
		line-height: 21px;
	}

	.tall dl {
		height: 91px;
	}

	.wide {
		grid-template-columns: 108px 1fr;
	}

	.counts {
		grid-template-columns: 72px 1fr;
	}

	.counts dd {
		grid-column: 2;
	}

	.counts b {
		display: inline-block;
		width: 13px;
		font-weight: normal;
	}

	.run {
		grid-template-columns: 63px 1fr;
		padding: 10px 7px 5px;
	}

	.next {
		grid-template-columns: 45px 1fr;
		padding-bottom: 2px;
	}

	.full {
		grid-column: 1 / 3;
	}

	article p {
		padding: 4px 9px 2px;
		line-height: 21px;
	}

	/* design runs */
	.runs {
		flex: none;
	}

	.runs-body {
		display: flex;
	}

	.table-box {
		flex: 1;
		display: flex;
		flex-direction: column;
		justify-content: space-between;
		min-width: 0;
		height: 206px;
		border: 1px solid #7f9db9;
		background: #fff;
	}

	table {
		width: 100%;
		border-collapse: collapse;
		table-layout: fixed;
	}

	.w-name { width: 199px; }
	.w-part { width: 93px; }
	.w-cons { width: 90px; }
	.w-strat { width: 166px; }
	.w-status { width: 70px; }
	.w-prog { width: 130px; }
	.w-start { width: 120px; }
	.w-elapsed { width: 65px; }

	th {
		height: 21px;
		padding: 0 0 0 8px;
		border-right: 1px solid #c5c2b2;
		border-bottom: 2px solid #d2cebd;
		background: #ece9d8;
		font-weight: normal;
		text-align: left;
	}

	td {
		height: 16px;
		padding: 0 0 0 2px;
		border-right: 1px solid #ece9d8;
		line-height: 16px;
		white-space: nowrap;
	}

	tbody tr:nth-child(even) {
		background: #f0f0f0;
	}

	.run-name {
		display: flex;
		align-items: center;
	}

	.run-name .icon {
		width: 14px;
		height: 14px;
	}

	.run-name span {
		padding-left: 2px;
	}

	.child {
		padding-left: 16px;
	}

	.progress {
		display: flex;
		align-items: center;
		gap: 3px;
		padding-left: 2px;
	}

	.progress span {
		width: 94px;
		height: 11px;
		border: 1px solid #000;
		background: #fff;
	}

	.progress i {
		display: block;
		height: 100%;
		background: #3a6ea5;
	}

	.scrollbar {
		display: flex;
		gap: 2px;
		height: 17px;
		padding: 1px;
		background: #f6f5f0;
	}

	.scrollbar button {
		width: 15px;
		border: 1px solid #b4c6f0;
		border-radius: 2px;
		background: #c5d5fd;
	}

	.scrollbar button svg {
		width: 13px;
		height: 13px;
		stroke: #3c5487;
		stroke-width: 2;
	}

	.scrollbar .corner {
		border-color: #aaa799;
		background: #ece9d8;
	}

	.scrollbar .corner svg {
		stroke: #888;
		stroke-width: 1;
	}

	.track {
		flex: 1;
	}

	.thumb {
		display: grid;
		place-items: center;
		width: 64%;
		height: 15px;
		border: 1px solid #98b0e4;
		border-radius: 2px;
		background: linear-gradient(#cbdafe, #b9cbf8);
	}

	.thumb svg {
		width: 8px;
		height: 6px;
		stroke: #8fa8dc;
	}

	/* status bar and what lies over it */
	.status {
		display: flex;
		justify-content: flex-end;
		align-items: flex-end;
		height: 28px;
		margin-top: 1px;
		padding: 0 13px 0 0;
		border-top: 1px solid #999690;
	}

	.ime {
		display: flex;
		align-items: center;
		justify-content: space-around;
		width: 149px;
		height: 21px;
		border: 1px solid #b8c8d8;
		background: #f8fbff;
		color: #2c7cc9;
		font-size: 16px;
		font-weight: bold;
	}

	.ime svg {
		width: 20px;
		height: 18px;
	}

	.taskbar {
		display: flex;
		justify-content: space-between;
		height: 4px;
		background: #2a6be0;
	}

	.start {
		width: 94px;
		background: #3c9a3c;
	}

	.tray {
		width: 167px;
		background: #12a0f0;
	}

	.watermark {
		position: absolute;
		right: 8px;
		bottom: 10px;
		color: rgba(120, 120, 110, 0.4);
		font-size: 17px;
		pointer-events: none;
	}

	.ball {
		position: absolute;
		top: 746px;
		right: -25px;
		width: 38px;
		height: 38px;
		border: 2px solid #a8b4a8;
		border-radius: 50%;
		background: radial-gradient(circle at 30% 30%, #7fd67f, #1f9a30 60%);
	}
</style>
